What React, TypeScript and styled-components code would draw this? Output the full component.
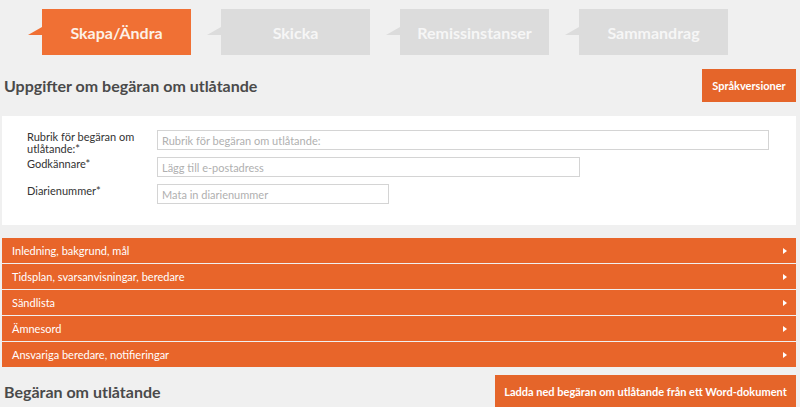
import React from "react";
import styled, { createGlobalStyle } from "styled-components";

const GlobalStyle = createGlobalStyle`
  * { box-sizing: border-box; }
  body {
    margin: 0;
    background: #f0f0f0;
    font-family: Lato, "Open Sans", "Liberation Sans", sans-serif;
    color: #333;
  }
`;

const steps = ["Skapa/Ändra", "Skicka", "Remissinstanser", "Sammandrag"];

const sections = [
  "Inledning, bakgrund, mål",
  "Tidsplan, svarsanvisningar, beredare",
  "Sändlista",
  "Ämnesord",
  "Ansvariga beredare, notifieringar",
];

export default function App() {
  return (
    <>
      <GlobalStyle />
      <Page>
        <StepsSC>
          {steps.map((s, i) => (
            <Step key={s} active={i === 0}>
              {s}
            </Step>
          ))}
        </StepsSC>

        <HeaderRow>
          <Heading>Uppgifter om begäran om utlåtande</Heading>
          <OrangeButton>Språkversioner</OrangeButton>
        </HeaderRow>

        <Panel>
          <FormGrid>
            <Label>Rubrik för begäran om utlåtande:*</Label>
            <Input width={612} placeholder="Rubrik för begäran om utlåtande:" />
            <Label>Godkännare*</Label>
            <Input width={423} placeholder="Lägg till e-postadress" />
            <Label>Diarienummer*</Label>
            <Input width={232} placeholder="Mata in diarienummer" />
          </FormGrid>
        </Panel>

        <Accordion>
          {sections.map((s) => (
            <AccordionRow key={s}>
              <span>{s}</span>
              <Arrow />
            </AccordionRow>
          ))}
        </Accordion>

        <HeaderRow bottom>
          <Heading>Begäran om utlåtande</Heading>
          <OrangeButton wide>
            Ladda ned begäran om utlåtande från ett Word-dokument
          </OrangeButton>
        </HeaderRow>
      </Page>
    </>
  );
}

const Page = styled.div`
  width: 800px;
  height: 407px;
  overflow: hidden;
`;

const StepsSC = styled.div`
  display: flex;
  column-gap: 30px;
  padding: 9px 0 0 42px;
`;

const Step = styled.div<{ active?: boolean }>`
  position: relative;
  width: 149px;
  height: 46px;
  display: flex;
  align-items: center;
  justify-content: center;
  font-size: 16px;
  font-weight: 700;
  color: ${(p) => (p.active ? "#fdf1e6" : "#f6f6f6")};
  background: ${(p) => (p.active ? "#f07034" : "#dcdcdc")};

  &::before {
    content: "";
    position: absolute;
    left: -14px;
    top: 18px;
    border-style: solid;
    border-width: 0 0 8px 14px;
    border-color: transparent transparent
      ${(p) => (p.active ? "#f07034" : "#dcdcdc")} transparent;
  }
`;

const HeaderRow = styled.div<{ bottom?: boolean }>`
  display: flex;
  justify-content: space-between;
  align-items: center;
  padding: 0 4px 0 4px;
  margin-top: ${(p) => (p.bottom ? "8px" : "14px")};
`;

const Heading = styled.h2`
  margin: 0;
  font-size: 16px;
  font-weight: 700;
  color: #4a4a4a;
`;

const OrangeButton = styled.button<{ wide?: boolean }>`
  height: 33px;
  width: ${(p) => (p.wide ? "301px" : "94px")};
  border: 0;
  padding: 0;
  background: #e5652a;
  color: #fff;
  font-family: inherit;
  font-size: 11px;
  font-weight: 700;
  cursor: pointer;
`;

const Panel = styled.div`
  margin: 14px 4px 0 2px;
  height: 109px;
  background: #fff;
  padding: 14px 0 0 25px;
`;

const FormGrid = styled.div`
  display: grid;
  grid-template-columns: 130px auto;
  grid-auto-rows: 20px;
  row-gap: 7px;
  align-items: start;
`;

const Label = styled.div`
  padding-top: 1px;
  max-width: 115px;
  font-size: 11px;
  line-height: 12px;
  color: #333;
`;

const Input = styled.input<{ width: number }>`
  width: ${(p) => p.width}px;
  height: 20px;
  border: 1px solid #d4d4d4;
  padding: 0 4px;
  font-family: inherit;
  font-size: 11px;
  color: #333;
  outline: none;

  &::placeholder {
    color: #b0b0b0;
  }
`;

const Accordion = styled.div`
  margin: 13px 4px 0 2px;
  display: flex;
  flex-direction: column;
  row-gap: 1px;
`;

const AccordionRow = styled.div`
  height: 25px;
  display: flex;
  align-items: center;
  justify-content: space-between;
  padding: 0 9px 0 10px;
  background: #e8652a;
  color: #fff;
  font-size: 11px;
`;

const Arrow = styled.span`
  width: 0;
  height: 0;
  border-style: solid;
  border-width: 3.5px 0 3.5px 4px;
  border-color: transparent transparent transparent #fff;
`;
